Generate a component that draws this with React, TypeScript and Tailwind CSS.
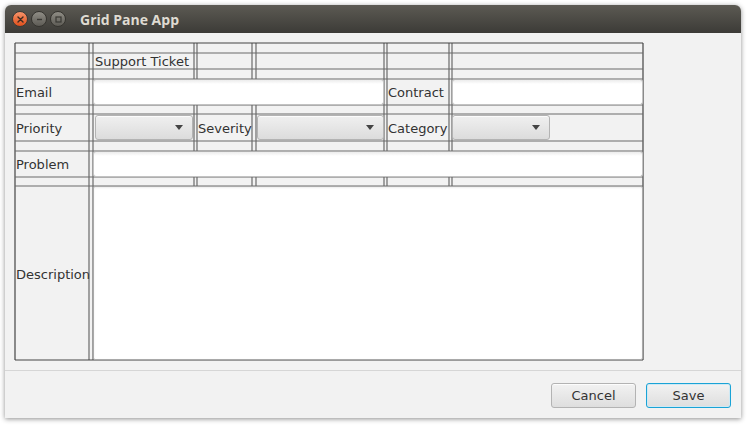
import type { ReactNode } from 'react';

// Grid Pane App - JavaFX style support ticket form

const colLines = [0, 74, 78, 179, 182, 237, 241, 369, 372, 434, 437, 628];
const rowLines = [0, 10, 26, 36, 62, 71, 98, 108, 134, 143, 317];

const font = { fontFamily: '"DejaVu Sans", "Liberation Sans", sans-serif' };

function WindowButton({ kind }: { kind: 'close' | 'min' | 'max' }) {
  if (kind === 'close') {
    return (
      <div className="flex h-[16px] w-[16px] items-center justify-center rounded-full border border-[#3b3a36] bg-[linear-gradient(to_bottom,#f6936a,#e0501c)]">
        <svg width="7" height="7" viewBox="0 0 7 7">
          <path d="M1 1L6 6M6 1L1 6" stroke="#3c2a20" strokeWidth="1.4" strokeLinecap="round" />
        </svg>
      </div>
    );
  }
  return (
    <div className="flex h-[16px] w-[16px] items-center justify-center rounded-full border border-[#35342f] bg-[linear-gradient(to_bottom,#8f8d85,#5d5b55)]">
      {kind === 'min' ? (
        <svg width="7" height="7" viewBox="0 0 7 7">
          <path d="M1 3.5H6" stroke="#3a3934" strokeWidth="1.4" />
        </svg>
      ) : (
        <svg width="7" height="7" viewBox="0 0 7 7">
          <rect x="1" y="1" width="5" height="5" fill="none" stroke="#3a3934" strokeWidth="1.2" />
        </svg>
      )}
    </div>
  );
}

function TitleBar() {
  return (
    <div className="flex h-[28px] shrink-0 items-center rounded-t-[6px] bg-[linear-gradient(to_bottom,#5c5a53,#3c3b37)]">
      <div className="ml-[7px] flex items-center gap-[3px]">
        <WindowButton kind="close" />
        <WindowButton kind="min" />
        <WindowButton kind="max" />
      </div>
      <span
        className="ml-[14px] text-[14px] font-bold text-[#dfdbd2]"
        style={{ fontFamily: '"Open Sans", "DejaVu Sans", sans-serif' }}
      >
        Grid Pane App
      </span>
    </div>
  );
}

function Label({ className, children }: { className: string; children: ReactNode }) {
  return (
    <div className={`flex items-center whitespace-nowrap pl-[1px] pt-[2px] text-[13px] text-[#333333] ${className}`}>
      {children}
    </div>
  );
}

function TextField({ className }: { className: string }) {
  return (
    <div
      className={`rounded-[3px] border border-[#c2c2c2] border-t-[#b0b0b0] bg-[linear-gradient(to_bottom,#ececec,#ffffff_4px)] ${className}`}
    />
  );
}

function Combo({ className }: { className: string }) {
  return (
    <div
      className={`flex h-[25px] items-center justify-end self-center rounded-[3px] border border-[#b3b3b3] bg-[linear-gradient(to_bottom,#f0f0f0,#dcdcdc)] pr-[9px] shadow-[inset_0_1px_0_rgba(255,255,255,0.8)] ${className}`}
    >
      <svg width="8" height="5" viewBox="0 0 8 5">
        <path d="M0 0H8L4 5Z" fill="#444444" />
      </svg>
    </div>
  );
}

function GridLines() {
  const outer = (v: number, max: number) => v === 0 || v === max;
  return (
    <svg
      className="pointer-events-none absolute left-0 top-0"
      width="628"
      height="317"
      overflow="visible"
    >
      {colLines.map((x, i) => (
        <line
          key={`c${i}`}
          x1={x}
          y1={0}
          x2={x}
          y2={317}
          stroke={outer(x, 628) ? '#444444' : '#6a6a6a'}
          strokeWidth="1.2"
        />
      ))}
      {rowLines.map((y, i) => (
        <line
          key={`r${i}`}
          x1={0}
          y1={y}
          x2={628}
          y2={y}
          stroke={outer(y, 317) ? '#444444' : '#6a6a6a'}
          strokeWidth="1.2"
        />
      ))}
    </svg>
  );
}

function TicketGrid() {
  return (
    <div className="relative h-[317px] w-[628px]">
      <GridLines />
      <div className="relative grid h-[317px] w-[628px] grid-cols-[74px_4px_101px_3px_55px_4px_128px_3px_62px_3px_191px] grid-rows-[0px_10px_16px_10px_26px_9px_27px_10px_26px_9px_174px]">
        <Label className="col-[3] row-[3] pl-[2px]">Support Ticket</Label>

        <Label className="col-[1] row-[5]">Email</Label>
        <TextField className="col-[3/8] row-[5]" />
        <Label className="col-[9] row-[5]">Contract</Label>
        <TextField className="col-[11] row-[5]" />

        <Label className="col-[1] row-[7]">Priority</Label>
        <Combo className="col-[3] row-[7] ml-[2px] w-[98px]" />
        <Label className="col-[5] row-[7]">Severity</Label>
        <Combo className="col-[7] row-[7] ml-[1px] w-[127px]" />
        <Label className="col-[9] row-[7]">Category</Label>
        <Combo className="col-[11] row-[7] w-[98px]" />

        <Label className="col-[1] row-[9]">Problem</Label>
        <TextField className="col-[3/12] row-[9]" />

        <Label className="col-[1] row-[11] pt-[4px]">Description</Label>
        <div className="col-[3/12] row-[11] rounded-[2px] border border-[#a9a9a9] bg-white shadow-[inset_0_1px_2px_rgba(0,0,0,0.08)]" />
      </div>
    </div>
  );
}

function Button({ focused, children }: { focused?: boolean; children: ReactNode }) {
  return (
    <button
      className={
        focused
          ? 'h-[25px] w-[85px] rounded-[3px] border border-[#1aa3d6] bg-[linear-gradient(to_bottom,#f2f2f2,#dedede)] pt-[1px] text-[13px] text-[#333333] shadow-[inset_0_0_0_1px_#cfe9f4]'
          : 'h-[25px] w-[85px] rounded-[3px] border border-[#b3b3b3] bg-[linear-gradient(to_bottom,#f2f2f2,#dedede)] pt-[1px] text-[13px] text-[#333333] shadow-[inset_0_1px_0_rgba(255,255,255,0.8)]'
      }
      style={font}
    >
      {children}
    </button>
  );
}

export default function App() {
  return (
    <div className="h-[428px] w-[750px] bg-white pl-[5px] pt-[5px]" style={font}>
      <div className="flex h-[413px] w-[736px] flex-col rounded-t-[6px] bg-[#f2f2f2] shadow-[0_1px_5px_rgba(0,0,0,0.45)]">
        <TitleBar />
        <div className="h-[337px] shrink-0 pl-[10px] pt-[10px]">
          <TicketGrid />
        </div>
        <div className="flex flex-1 justify-end gap-[10px] border-t border-[#d6d6d6] pr-[10px] pt-[12px]">
          <Button>Cancel</Button>
          <Button focused>Save</Button>
        </div>
      </div>
    </div>
  );
}
